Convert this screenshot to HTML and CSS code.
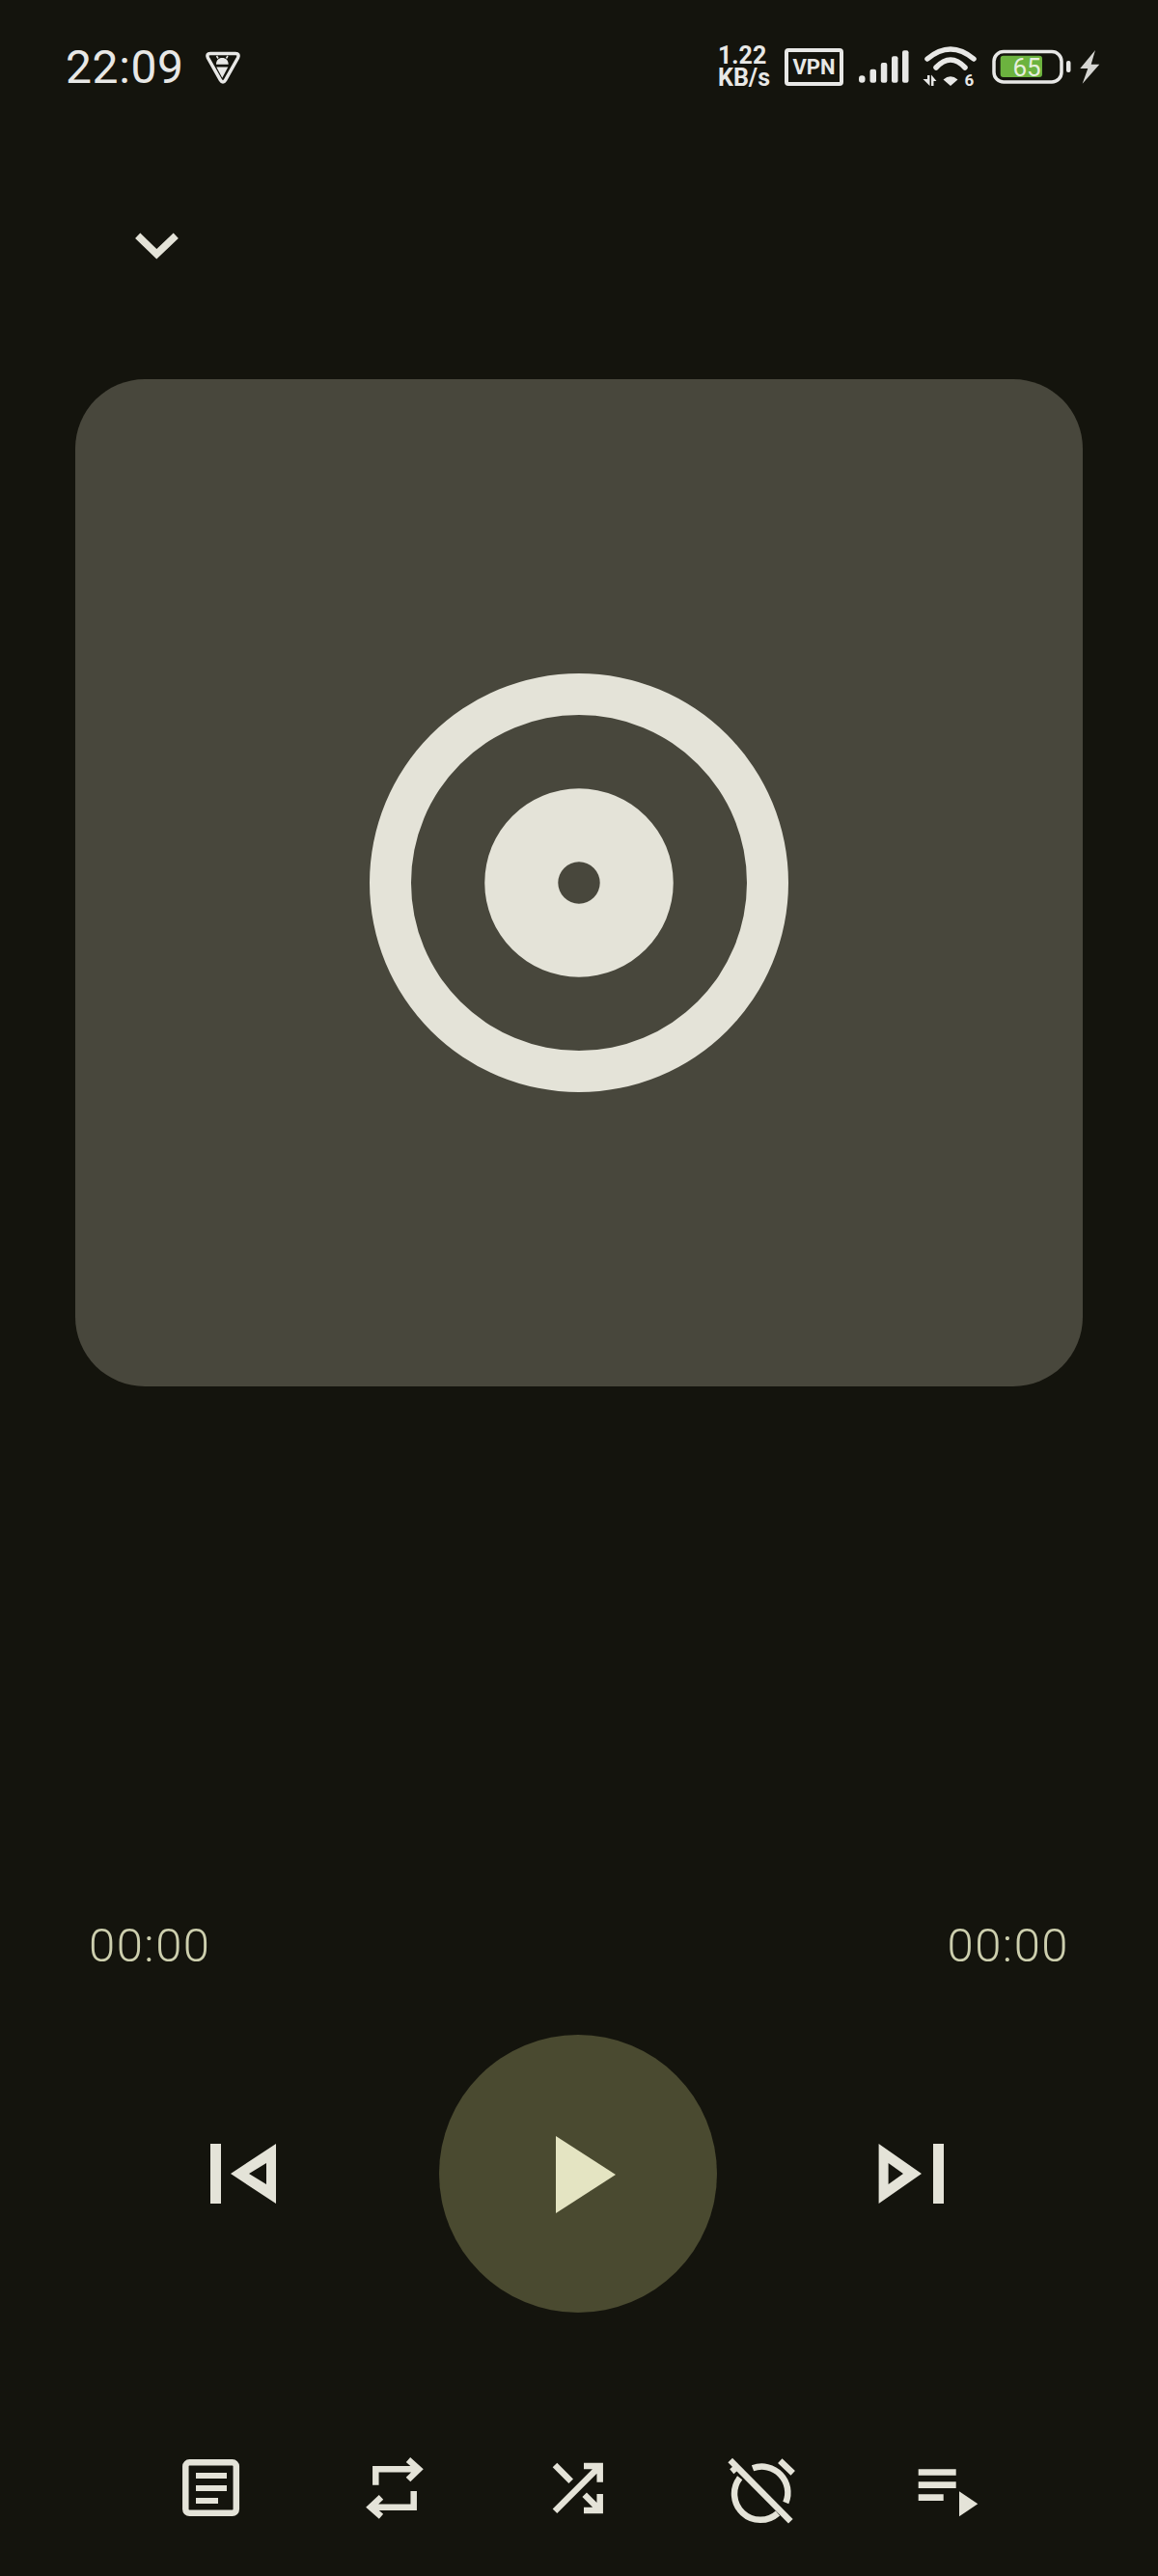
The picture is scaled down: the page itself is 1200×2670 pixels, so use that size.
FILE: index.html
```html
<!DOCTYPE html>
<html>
<head>
  <meta charset="UTF-8">
  <title>Player</title>
  <link rel="stylesheet" href="styles.css">
</head>
<body>
<div class="screen">

  <div class="status">
    <span class="clock">22:09</span>
    <svg class="badge" viewBox="0 0 38 36">
      <path class="line-thin" d="M6 3.5H32Q36.5 3.5 34.5 8L21.5 31Q19 35 16.5 31L3.5 8Q1.5 3.5 6 3.5Z"/>
      <path class="white" d="M12 14.7C12 10.5 14.5 8 18.3 8S24.7 10.5 24.7 14.7ZM12.3 17.5H24.3L18.3 28.7Z"/>
      <path class="antenna" d="M14 8.5L12.5 6M22.5 8.5L24 6"/>
    </svg>
    <div class="speed">1.22<br>KB/s</div>
    <div class="vpn">VPN</div>
    <svg class="signal" viewBox="0 0 52 36">
      <rect class="white" x="0" y="27.3" width="6.5" height="7.4" rx="3"/>
      <rect class="white" x="11.5" y="20.7" width="6.5" height="14" rx="2"/>
      <rect class="white" x="22.8" y="14" width="6.5" height="20.7" rx="2"/>
      <rect class="white" x="34" y="7.3" width="6.5" height="27.4" rx="2"/>
      <rect class="white" x="45" y="1.3" width="6.5" height="33.4" rx="2"/>
    </svg>
    <svg class="wifi" viewBox="0 0 70 55">
      <path class="wave" d="M11 19Q35 -1 59 19"/>
      <path class="wave" d="M20 28Q35 12 50 28"/>
      <path class="white" d="M27.5 40.5Q35 34 42.500 40.5L35 47Z"/>
      <path class="white" d="M6.500 40H11V36H13.500V47Z"/>
      <path class="white" d="M15 35.500L20.500 42H17.500V47H15Z"/>
      <text class="wifi-six" x="49.5" y="47">6</text>
    </svg>
    <svg class="battery" viewBox="0 0 82 37">
      <rect class="line-thin" x="2" y="2.5" width="70" height="31.5" rx="10"/>
      <rect class="battery-fill" x="8.7" y="6.7" width="43.3" height="22.3" rx="3"/>
      <rect class="white" x="77" y="12" width="4.5" height="12" rx="2"/>
      <text class="battery-text" x="21.5" y="27.5">65</text>
    </svg>
    <svg class="bolt" viewBox="0 0 22 35">
      <path class="bolt-fill" d="M17 0L1.3 19H9.3L3.7 34.7L21.3 14.7H12.7Z"/>
    </svg>
  </div>

  <div class="topbar">
    <svg class="chevron" viewBox="0 0 80 40">
      <path class="stroke chevron-line" d="M20.7 10.300L40.3 29.300L60.3 10.300"/>
    </svg>
  </div>

  <div class="cover">
    <svg class="disc" viewBox="0 0 440 440">
      <path class="icon-fill" fill-rule="evenodd" d="M220 3A217 217 0 1 0 220 437A217 217 0 1 0 220 3ZM220 46A174 174 0 1 1 220 394A174 174 0 1 1 220 46ZM220 122.300A97.700 97.700 0 1 0 220 317.700A97.700 97.700 0 1 0 220 122.300ZM220 198.300A21.700 21.700 0 1 1 220 241.700A21.700 21.700 0 1 1 220 198.300Z"/>
    </svg>
  </div>

  <div class="times">
    <span>00:00</span>
    <span>00:00</span>
  </div>

  <div class="controls">
    <svg class="ctrl" viewBox="0 0 80 80">
      <path class="icon-fill" fill-rule="evenodd" d="M6 9H17V71H6ZM27 40L74 9V71ZM46 40L64 51V29Z"/>
    </svg>
    <div class="play">
      <svg class="play-icon" viewBox="0 0 80 84">
        <path class="play-fill" d="M17 3L79 43L17 83Z"/>
      </svg>
    </div>
    <svg class="ctrl" viewBox="0 0 80 80">
      <path class="icon-fill" fill-rule="evenodd" d="M61 9H72V71H61ZM4.600 9L49 40L4.600 71ZM14.600 29V51L30 40Z"/>
    </svg>
  </div>

  <div class="actions">
    <svg class="action" viewBox="0 0 80 80">
      <rect class="stroke" x="13.300" y="14.300" width="52.500" height="52.500" rx="4"/>
      <path class="icon-fill" d="M24 25H56V31H24ZM24 38H56V44H24ZM24 51H47V57H24Z"/>
    </svg>
    <svg class="action" viewBox="0 0 80 80">
      <path class="stroke" d="M20.300 37.700V21.300H62M54 11.500L65 21.300L54 32"/>
      <path class="stroke" d="M59.700 44V60.700H17M26 50.300L15 60.700L26 70.300"/>
    </svg>
    <svg class="action" viewBox="0 0 80 80">
      <path class="stroke" d="M16 17L32.700 33.700M16 64.700L62.700 18M46 18H62.700V34.700"/>
      <path class="stroke" d="M46.700 47.700L62.700 63.700M62.700 47V64H46"/>
    </svg>
    <svg class="action" viewBox="0 0 80 80">
      <path class="stroke" d="M7.700 12L70.300 75.300"/>
      <path class="stroke" d="M59.300 12.700L72.700 25.300M9.300 23.700L16 18"/>
      <path class="stroke" d="M31 20.300A27 27 0 0 1 65.300 56"/>
      <path class="stroke" d="M17.700 30.300A27 27 0 0 0 57 67"/>
    </svg>
    <svg class="action" viewBox="0 0 80 80">
      <path class="icon-fill" d="M12.700 21.300H51.700V27.700H12.700ZM12.700 34.300H51.700V41H12.700ZM12.700 47.300H38.700V54H12.700ZM55 44.300L74.300 57.300L55 70.300Z"/>
    </svg>
  </div>

</div>
</body>
</html>
```

FILE: styles.css
```css
body {
  margin: 0;
  background-color: #14140d;
}

.screen {
  width: 1200px;
  height: 2670px;
  display: flex;
  flex-direction: column;
  background-color: #14140d;
  font-family: Roboto, sans-serif;
  overflow: hidden;
}

/* status bar */
.status {
  height: 138px;
  flex: none;
  display: flex;
  align-items: center;
  padding-left: 68px;
}

.clock {
  font-size: 48px;
  letter-spacing: 0.6px;
  color: #e8e8e6;
  width: 144px;
}

.badge {
  width: 38px;
  height: 36px;
  margin-top: 2px;
}

.speed {
  margin-left: auto;
  width: 69px;
  font-size: 25px;
  font-weight: 700;
  line-height: 23px;
  color: #e8e8e6;
}

.vpn {
  width: 61px;
  height: 39px;
  box-sizing: border-box;
  border: 4px solid #e8e8e6;
  border-radius: 4px;
  font-size: 22px;
  font-weight: 700;
  line-height: 31px;
  text-align: center;
  color: #e8e8e6;
}

.signal {
  width: 52px;
  height: 36px;
  margin-left: 16px;
}

.wifi {
  width: 70px;
  height: 55px;
  margin-left: 8px;
}

.battery {
  width: 82px;
  height: 37px;
  margin-left: 8px;
}

.bolt {
  width: 22px;
  height: 35px;
  margin-left: 8px;
  margin-right: 60px;
}

.white {
  fill: #e8e8e6;
}

.line-thin {
  fill: none;
  stroke: #e8e8e6;
  stroke-width: 3.5;
}

.antenna {
  fill: none;
  stroke: #e8e8e6;
  stroke-width: 1.5;
}

.wave {
  fill: none;
  stroke: #e8e8e6;
  stroke-width: 5.5;
  stroke-linecap: round;
}

.wifi-six {
  font-size: 17px;
  font-weight: 700;
  fill: #e8e8e6;
}

.battery-fill {
  fill: #6cb33f;
}

.battery-text {
  font-size: 26px;
  fill: #e6efdd;
}

.bolt-fill {
  fill: #d6d6d2;
}

/* top */
.topbar {
  height: 232px;
  flex: none;
  display: flex;
  align-items: center;
  padding-left: 122px;
}

.chevron {
  width: 80px;
  height: 40px;
}

.stroke {
  fill: none;
  stroke: #e4e3d8;
  stroke-width: 6.5;
}

.chevron-line {
  stroke-width: 7.5;
}

.icon-fill {
  fill: #e4e3d8;
}

.cover {
  height: 1044px;
  flex: none;
  margin: 23px 78px 0;
  border-radius: 72px;
  background-color: #48473c;
  display: flex;
  align-items: center;
  justify-content: center;
}

.disc {
  width: 440px;
  height: 440px;
}

.times {
  margin-top: 550px;
  height: 60px;
  flex: none;
  display: flex;
  justify-content: space-between;
  padding: 0 92px;
  font-size: 49px;
  font-weight: 300;
  letter-spacing: 1.5px;
  line-height: 60px;
  color: #cdcfae;
}

.controls {
  margin-top: 62px;
  padding-right: 2px;
  flex: none;
  display: flex;
  align-items: center;
  justify-content: center;
  gap: 163px;
}

.ctrl {
  width: 80px;
  height: 80px;
}

.play {
  width: 288px;
  height: 288px;
  border-radius: 50%;
  background-color: #4a4a30;
  display: flex;
  align-items: center;
  justify-content: center;
}

.play-icon {
  width: 80px;
  height: 84px;
}

.play-fill {
  fill: #e4e4c2;
}

.actions {
  margin-top: 141px;
  padding-right: 2px;
  flex: none;
  display: grid;
  grid-template-columns: repeat(5, 190px);
  justify-content: center;
  justify-items: center;
}

.action {
  width: 80px;
  height: 80px;
}
```
